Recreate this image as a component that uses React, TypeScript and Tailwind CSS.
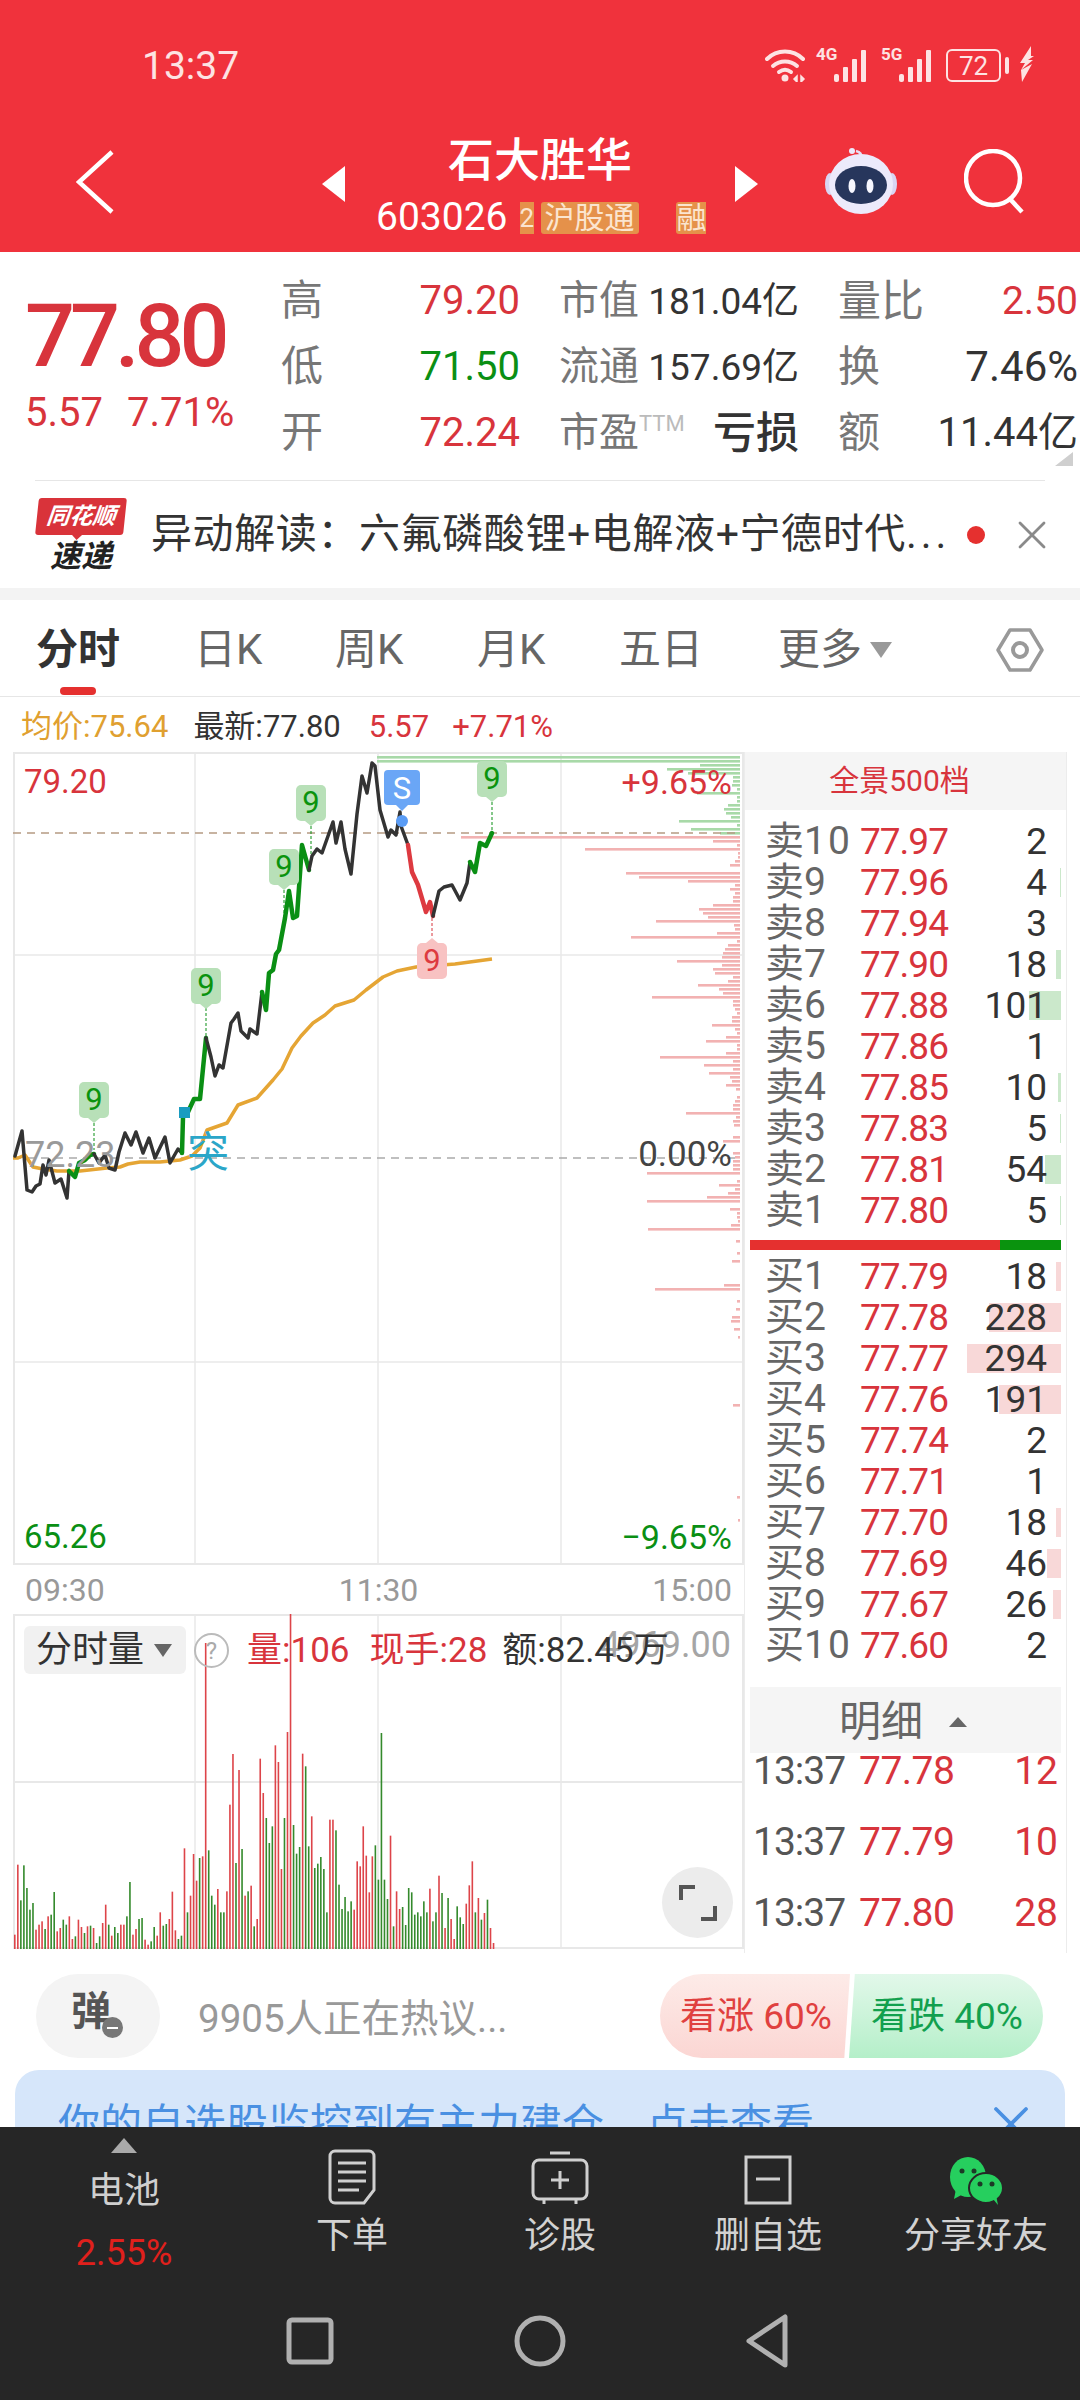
import { X } from "lucide-react";

const RED = "#d8343c";

const sellRows = [
  { n: "10", p: "77.97", v: "2", w: 0 },
  { n: "9", p: "77.96", v: "4", w: 1 },
  { n: "8", p: "77.94", v: "3", w: 0 },
  { n: "7", p: "77.90", v: "18", w: 5 },
  { n: "6", p: "77.88", v: "101", w: 32 },
  { n: "5", p: "77.86", v: "1", w: 0 },
  { n: "4", p: "77.85", v: "10", w: 3 },
  { n: "3", p: "77.83", v: "5", w: 1 },
  { n: "2", p: "77.81", v: "54", w: 16 },
  { n: "1", p: "77.80", v: "5", w: 1 },
];

const buyRows = [
  { n: "1", p: "77.79", v: "18", w: 5 },
  { n: "2", p: "77.78", v: "228", w: 72 },
  { n: "3", p: "77.77", v: "294", w: 94 },
  { n: "4", p: "77.76", v: "191", w: 62 },
  { n: "5", p: "77.74", v: "2", w: 0 },
  { n: "6", p: "77.71", v: "1", w: 0 },
  { n: "7", p: "77.70", v: "18", w: 5 },
  { n: "8", p: "77.69", v: "46", w: 14 },
  { n: "9", p: "77.67", v: "26", w: 8 },
  { n: "10", p: "77.60", v: "2", w: 0 },
];

const trades = [
  { t: "13:37", p: "77.78", v: "12" },
  { t: "13:37", p: "77.79", v: "10" },
  { t: "13:37", p: "77.80", v: "28" },
];

// price line, split where the colour changes (page pixels)
const priceSegments = [
  { c: "#333333", w: 3.5, d: "15,1156 22,1131 27,1190 32,1192 36,1186 40,1184 43,1165 46,1175 49,1160 55,1183 61,1179 67,1198 69,1171" },
  { c: "#0a8f14", w: 4.5, d: "69,1171 75,1177 79,1163 85,1160 90,1155 94,1154" },
  { c: "#333333", w: 3.5, d: "94,1154 99,1163 105,1155 109,1168 115,1170 119,1152 125,1133 131,1145 136,1132 143,1153 149,1138 155,1158 165,1137 170,1163 178,1149 182,1153" },
  { c: "#0a8f14", w: 4.5, d: "182,1153 183,1117 188,1112 194,1099 200,1099 206,1038" },
  { c: "#333333", w: 3.5, d: "206,1038 211,1057 215,1076 219,1065 223,1068 231,1023 234,1019 238,1013 241,1031 248,1038 250,1029 257,1034 262,992" },
  { c: "#0a8f14", w: 4.5, d: "262,992 266,1010 269,973 273,970 276,954 279,950 285,918 289,891 293,918 297,916 302,845 309,870" },
  { c: "#333333", w: 3.5, d: "309,870 312,856 317,849 322,853 333,822 336,843 341,822 345,849 351,874 357,814 362,776 367,793 372,763 375,766 380,810 388,837 391,830 396,835 400,812 401,826 408,845" },
  { c: "#dd3a40", w: 4.5, d: "408,845 412,872 418,885 426,912 430,902 433,916" },
  { c: "#333333", w: 3.5, d: "433,916 439,891 444,887 452,885 460,900 467,883 470,862" },
  { c: "#0a8f14", w: 4.5, d: "470,862 475,872 480,843 486,846 492,833" },
];

const avgLine =
  "13,1158 18,1158 25,1155 33,1167 43,1169 57,1171 80,1171 107,1168 120,1167 128,1164 140,1162 160,1162 180,1160 192,1156 200,1148 207,1130 227,1123 238,1105 257,1098 273,1080 282,1069 292,1048 301,1036 313,1023 325,1015 335,1006 354,1000 366,990 383,977 397,971 416,967 455,964 492,959";

// depth bars down the right edge of the chart, one every 4px
const depthGreen = [363, 363, 40, 73, 52, 7, 7, 8, 3, 43, 3, 3, 12, 16, 14, 9, 61, 3, 49, 20];
const depthRed = [
  279, 27, 3, 155, 2, 2, 5, 10, 0, 114, 101, 52, 5, 10, 5, 7, 7, 27, 41, 37, 32, 84, 6, 5, 23, 109, 3, 12, 15, 17, 18, 63, 18,
  27, 25, 7, 12, 42, 21, 17, 88, 7, 7, 5, 3, 8, 8, 28, 5, 3, 14, 34, 3, 3, 14, 80, 7, 36, 7, 31, 10, 8, 14, 4, 0, 3, 5, 7, 7,
  54, 4, 7, 6, 0, 0, 7, 17, 0, 0, 7, 5, 7, 7, 7, 93, 0, 3, 21, 5, 12, 33, 93, 0, 10, 3, 3, 2, 9, 92,
];
const depthLow = [
  [1240, 4], [1252, 3], [1260, 8], [1284, 16], [1288, 85], [1300, 3], [1308, 4], [1316, 8], [1320, 9], [1328, 6], [1336, 2],
  [1404, 7], [1496, 3], [1519, 2],
];

// y of each volume bar's top, sampled from the 3x crop (baseline 1078)
const volumeBars =
  "r1035 r825 g932 g827 g895 g960 g940 r1020 r1005 r995 g1018 r980 g975 g907 r1025 r1015 g990 g1005 r980 r1048 g1040 r990 r1012 g1030 r1010 g1008 r1015 g1060 g1040 r1000 r945 g1005 r1038 g1012 g1030 r1005 r1005 g980 g877 r1035 r1018 g988 g985 r1050 r1065 g1055 g1012 r1038 r968 g1008 g1003 r988 r906 r1022 g1048 g1038 r776 g968 r918 r793 r873 g805 r800 r160 g782 g918 g945 r898 g968 g968 r905 r645 r493 g820 r541 g778 r918 g905 r888 g1010 r988 r507 r610 g685 g760 g710 r467 r517 r838 g685 r427 r72 g706 g792 g772 r492 g530 g770 r680 g835 g822 g802 g838 g968 r690 r690 g722 g885 g958 g922 g965 g935 r960 r815 r830 r710 r798 r908 r800 g767 g870 g430 g870 g928 r738 g1010 r905 r958 g952 g1006 g895 g908 g975 g968 g980 g935 g968 r897 g995 g968 r858 g910 r1015 g925 r988 r1048 g950 g983 g1003 r942 r887 r815 g968 r925 g990 r970 g930 r1015 r1060".split(
    " ",
  );

function Marker({ x, top, color, bg, up }: { x: number; top: number; color: string; bg: string; up?: boolean }) {
  const h = 36;
  return (
    <g>
      <rect x={x - 15} y={top} width={30} height={h} rx={5} fill={bg} />
      {up ? (
        <polygon points={`${x - 6},${top} ${x},${top - 5} ${x + 6},${top}`} fill={bg} />
      ) : (
        <polygon points={`${x - 6},${top + h} ${x},${top + h + 5} ${x + 6},${top + h}`} fill={bg} />
      )}
      <text x={x} y={top + 28} textAnchor="middle" fontSize={31} fontFamily="Roboto" fill={color}>
        9
      </text>
    </g>
  );
}

function PriceChart() {
  const gridX = [195, 378, 561];
  return (
    <div className="relative h-[813px] w-[731px]">
      <svg className="absolute inset-0" width={731} height={813} viewBox="13 752 731 813">
        <rect x={14} y={753} width={729} height={811} fill="none" stroke="#e8e8e8" strokeWidth={2} />
        {gridX.map((x) => (
          <line key={x} x1={x} y1={752} x2={x} y2={1565} stroke="#e8e8e8" strokeWidth={1.5} />
        ))}
        <line x1={13} y1={955} x2={742} y2={955} stroke="#e8e8e8" strokeWidth={1.5} />
        <line x1={13} y1={1362} x2={742} y2={1362} stroke="#e8e8e8" strokeWidth={1.5} />

        {depthGreen.map((len, i) => (
          <rect key={i} x={740 - len} y={756 + i * 4} width={len} height={2.6} fill="#a8d9a8" />
        ))}
        {depthRed.map((len, i) => (
          <rect key={i} x={740 - len} y={836 + i * 4} width={len} height={2.6} fill="#f2b2b2" />
        ))}
        {depthLow.map(([y, len]) => (
          <rect key={y} x={740 - len} y={y} width={len} height={2.6} fill="#f2b2b2" />
        ))}

        <line x1={13} y1={833} x2={740} y2={833} stroke="#b59a82" strokeWidth={1.5} strokeDasharray="8 6" />
        <line x1={13} y1={1158} x2={740} y2={1158} stroke="#aaaaaa" strokeWidth={1.5} strokeDasharray="8 6" />

        <polyline points={avgLine} fill="none" stroke="#e5a534" strokeWidth={3.5} strokeLinejoin="round" />
        {priceSegments.map((s, i) => (
          <polyline key={i} points={s.d} fill="none" stroke={s.c} strokeWidth={s.w} strokeLinejoin="round" strokeLinecap="round" />
        ))}

        <line x1={94} y1={1123} x2={94} y2={1150} stroke="#0a8f14" strokeWidth={1} strokeDasharray="3 2" />
        <line x1={206} y1={1008} x2={206} y2={1036} stroke="#0a8f14" strokeWidth={1} strokeDasharray="3 2" />
        <line x1={284} y1={890} x2={284} y2={916} stroke="#0a8f14" strokeWidth={1} strokeDasharray="3 2" />
        <line x1={311} y1={826} x2={311} y2={856} stroke="#0a8f14" strokeWidth={1} strokeDasharray="3 2" />
        <line x1={492} y1={802} x2={492} y2={832} stroke="#0a8f14" strokeWidth={1} strokeDasharray="3 2" />
        <line x1={432} y1={918} x2={432} y2={938} stroke={RED} strokeWidth={1} strokeDasharray="3 2" />

        <Marker x={94} top={1082} color="#0a930e" bg="#b8e0b8" />
        <Marker x={206} top={968} color="#0a930e" bg="#b8e0b8" />
        <Marker x={284} top={849} color="#0a930e" bg="#b8e0b8" />
        <Marker x={311} top={785} color="#0a930e" bg="#b8e0b8" />
        <Marker x={492} top={761} color="#0a930e" bg="#b8e0b8" />
        <Marker x={432} top={943} color="#dd3a40" bg="#f8c2c2" up />

        <rect x={384} y={770} width={36} height={35} rx={4} fill="#6aa6f6" />
        <polygon points="396,805 402,811 408,805" fill="#6aa6f6" />
        <circle cx={402} cy={821} r={6} fill="#5a9cf5" />
        <text x={402} y={799} textAnchor="middle" fontSize={31} fontFamily="Roboto" fill="#ffffff">
          S
        </text>
        <rect x={179} y={1107} width={11} height={11} fill="#1a9cc0" />
      </svg>

      <span className="absolute left-[11px] top-[14px] text-[33px] leading-[32px] text-[#d8343c]">79.20</span>
      <span className="absolute right-[12px] top-[14px] text-[34px] leading-[32px] text-[#d8343c]">+9.65%</span>
      <span className="absolute left-[12px] top-[386px] text-[36px] leading-[34px] text-[#9a9a9a]">72.23</span>
      <span className="absolute left-[174px] top-[378px] text-[42px] leading-[46px] text-[#2ba6c8]">突</span>
      <span className="absolute right-[12px] top-[386px] text-[35px] leading-[34px] text-[#444444]">0.00%</span>
      <span className="absolute left-[11px] bottom-[12px] text-[33px] leading-[32px] text-[#0a8f14]">65.26</span>
      <span className="absolute right-[12px] bottom-[12px] text-[34px] leading-[32px] text-[#0a8f14]">−9.65%</span>
    </div>
  );
}

function VolumeChart() {
  return (
    <div className="relative h-[335px] w-[731px]">
      <svg className="absolute inset-0" width={731} height={335} viewBox="13 1614 731 335">
        <rect x={14} y={1615} width={729} height={333} fill="none" stroke="#e8e8e8" strokeWidth={2} />
        {[195, 378, 561].map((x) => (
          <line key={x} x1={x} y1={1614} x2={x} y2={1949} stroke="#e8e8e8" strokeWidth={1.5} />
        ))}
        <line x1={13} y1={1782} x2={742} y2={1782} stroke="#e8e8e8" strokeWidth={2} />
        {volumeBars.map((b, i) => {
          const h = (1078 - Number(b.slice(1))) / 3;
          return (
            <rect
              key={i}
              x={14 + i * 3.03}
              y={1949 - h}
              width={1.6}
              height={h}
              fill={b[0] === "r" ? "#dd4449" : "#348a2c"}
            />
          );
        })}
      </svg>

      <div className="absolute left-[11px] top-[12px] flex h-[48px] w-[162px] items-center rounded-[6px] bg-[#f1f1f1] pl-[12px]">
        <span className="text-[36px] leading-none text-[#333333]">分时量</span>
        <span className="ml-[10px] h-0 w-0 border-x-[9px] border-t-[13px] border-x-transparent border-t-[#666666]" />
      </div>
      <div className="absolute left-[181px] top-[19px] flex h-[35px] w-[35px] items-center justify-center rounded-full border-2 border-[#bbbbbb] text-[24px] leading-none text-[#aaaaaa]">
        ?
      </div>
      <span className="absolute right-[13px] top-[13px] text-[36px] leading-[36px] text-[#a5a5a5]">4969.00</span>
      <div className="absolute left-[234px] top-[19px] flex items-center text-[35px] leading-[36px] text-[#d8343c]">
        <span>量:106</span>
        <span className="ml-[20px]">现手:28</span>
        <span className="ml-[15px] text-[#333333]">额:82.45万</span>
      </div>

      <div className="absolute left-[649px] top-[253px] flex h-[71px] w-[71px] items-center justify-center rounded-full bg-[#ececec]">
        <svg width={38} height={38} viewBox="0 0 38 38" fill="none" stroke="#555555" strokeWidth={4}>
          <path d="M2 16V3h14M36 22v13H22" />
        </svg>
      </div>
    </div>
  );
}

function BookRow({ prefix, n, p, v, w, bar }: { prefix: string; n: string; p: string; v: string; w: number; bar: string }) {
  return (
    <div className="relative flex h-[41px] items-center pl-[20px] pr-[19px]">
      {w > 0 && (
        <div className={`absolute right-[5px] top-[6px] h-[29px] ${bar}`} style={{ width: w }} />
      )}
      <div className="relative flex w-[95px] items-center text-[#666666]">
        <span className="text-[39px] leading-none">{prefix}</span>
        <span className="text-[39px] leading-none tracking-[2px]">{n}</span>
      </div>
      <span className="relative text-[37px] leading-none tracking-[-1px] text-[#d8343c]">{p}</span>
      <span className="relative flex-1 text-right text-[37px] leading-none text-[#333333]">{v}</span>
    </div>
  );
}

function OrderBook() {
  return (
    <div className="flex h-[1201px] w-[323px] flex-col border-x border-[#ececec]">
      <div className="flex h-[58px] items-center justify-center bg-[#f5f5f5] pr-[12px] text-[30px] leading-none text-[#d8343c]">
        全景500档
      </div>
      <div className="mt-[11px]">
        {sellRows.map((r) => (
          <BookRow key={r.n} prefix="卖" {...r} bar="bg-[#cbe8cb]" />
        ))}
      </div>
      <div className="ml-[5px] mr-[5px] mt-[9px] flex h-[10px]">
        <div className="w-[250px] bg-[#e5302f]" />
        <div className="flex-1 bg-[#0a930e]" />
      </div>
      <div className="mt-[6px]">
        {buyRows.map((r) => (
          <BookRow key={r.n} prefix="买" {...r} bar="bg-[#f8d8d8]" />
        ))}
      </div>
      <div className="relative mx-[5px] mt-[21px] flex h-[66px] items-center bg-[#f5f5f5] pl-[89px] pt-[4px]">
        <span className="text-[42px] leading-none text-[#666666]">明细</span>
        <span className="ml-[26px] h-0 w-0 border-x-[9px] border-b-[10px] border-x-transparent border-b-[#666666]" />
      </div>
      <div className="flex flex-1 flex-col gap-[35px]">
        {trades.map((r) => (
          <div key={r.p} className="flex h-[36px] items-center pl-[8px] pr-[8px] text-[39px] leading-none">
            <span className="w-[106px] tracking-[-1px] text-[#555555]">{r.t}</span>
            <span className="tracking-[-0.5px] text-[#d8343c]">{r.p}</span>
            <span className="flex-1 text-right text-[#d8343c]">{r.v}</span>
          </div>
        ))}
      </div>
    </div>
  );
}

function StatusIcons() {
  const c = "#fde3e3";
  const bars = (
    <>
      <rect x={0} y={24} width={5} height={8} rx={2} fill={c} />
      <rect x={9} y={17} width={5} height={15} rx={1} fill={c} />
      <rect x={18} y={9} width={5} height={23} rx={1} fill={c} />
      <rect x={27} y={0} width={5} height={32} rx={1} fill={c} />
    </>
  );
  return (
    <div className="flex items-end">
      <svg width={42} height={34} viewBox="0 0 42 34" fill="none" stroke={c} strokeWidth={4} strokeLinecap="round">
        <path d="M2 11C12 1 28 1 38 11" />
        <path d="M8 18c7-6 17-6 24 0" />
        <path d="M14 24c4-3 8-3 12 0" />
        <circle cx={20} cy={30} r={2.5} fill={c} strokeWidth={2} />
        <path d="M29 31l3-3v6zM36 28l3 3-3 3z" strokeWidth={1.5} fill={c} />
      </svg>
      <div className="relative ml-[9px] h-[34px] w-[50px]">
        <span className="absolute left-0 top-[-2px] text-[17px] font-bold leading-none text-[#fde3e3]">4G</span>
        <svg className="absolute bottom-0 right-0" width={32} height={32} viewBox="0 0 32 32">
          {bars}
        </svg>
      </div>
      <div className="relative ml-[15px] h-[34px] w-[50px]">
        <span className="absolute left-0 top-[-2px] text-[17px] font-bold leading-none text-[#fde3e3]">5G</span>
        <svg className="absolute bottom-0 right-0" width={32} height={32} viewBox="0 0 32 32">
          {bars}
        </svg>
      </div>
      <div className="ml-[15px] flex h-[33px] w-[55px] items-center justify-center rounded-[6px] border-2 border-[#fde3e3] text-[26px] leading-none text-[#fde3e3]">
        72
      </div>
      <div className="mb-[8px] ml-[4px] h-[17px] w-[4px] rounded-sm bg-[#fde3e3]" />
      <svg className="ml-[9px]" width={18} height={36} viewBox="0 0 18 36" fill={c}>
        <path d="M13 0L2 17h5L3 24l12-10h-5l6-4-3 0zM3 24l11-6L4 36z" />
      </svg>
    </div>
  );
}

function Robot() {
  return (
    <svg width={72} height={66} viewBox="0 0 72 66">
      <path d="M36 10c1-4-1-6-5-7" fill="none" stroke="#e4e1f7" strokeWidth={2.5} />
      <circle cx={27} cy={3} r={3} fill="#ece9fb" />
      <ellipse cx={5} cy={36} rx={5} ry={11} fill="#d9d5f3" />
      <ellipse cx={67} cy={36} rx={5} ry={11} fill="#d9d5f3" />
      <ellipse cx={36} cy={36} rx={32} ry={30} fill="#eceafb" />
      <ellipse cx={36} cy={37} rx={26} ry={19} fill="#27365c" />
      <ellipse cx={27} cy={38} rx={3.5} ry={7} fill="#f7f7ff" />
      <ellipse cx={45} cy={38} rx={3.5} ry={7} fill="#f7f7ff" />
    </svg>
  );
}

function Stat({ label, labelSize, value, valueClass, sup }: { label: string; labelSize: string; value: string; valueClass: string; sup?: boolean }) {
  return (
    <div className="flex h-[66px] items-center justify-between">
      <span className={`flex items-start leading-none text-[#777777] ${labelSize}`}>
        {label}
        {sup && <span className="text-[22px] leading-none text-[#bbbbbb]">TTM</span>}
      </span>
      <span className={`leading-none ${valueClass}`}>{value}</span>
    </div>
  );
}

function QuotePanel() {
  return (
    <div className="relative h-[336px] bg-white">
      <div className="flex h-[228px] items-start pt-[16px]">
        <div className="ml-[25px] w-[256px] pt-[24px]">
          <div className="text-[88px] font-medium leading-[88px] tracking-[-5px] text-[#d8343c]">77.80</div>
          <div className="mt-[13px] flex text-[40px] leading-none text-[#d8343c]">
            <span>5.57</span>
            <span className="ml-[24px]">7.71%</span>
          </div>
        </div>
        <div className="grid w-[797px] grid-cols-[239px_240px_240px] gap-x-[39px] text-[#333333]">
          <Stat label="高" labelSize="text-[42px]" value="79.20" valueClass="text-[40px] text-[#d8343c]" />
          <Stat label="市值" labelSize="text-[40px]" value="181.04亿" valueClass="text-[37px] text-[#333333]" />
          <Stat label="量比" labelSize="text-[43px]" value="2.50" valueClass="text-[39px] text-[#d8343c]" />
          <Stat label="低" labelSize="text-[42px]" value="71.50" valueClass="text-[40px] text-[#0a8f14]" />
          <Stat label="流通" labelSize="text-[40px]" value="157.69亿" valueClass="text-[37px] text-[#333333]" />
          <Stat label="换" labelSize="text-[42px]" value="7.46%" valueClass="text-[42px] text-[#333333]" />
          <Stat label="开" labelSize="text-[42px]" value="72.24" valueClass="text-[40px] text-[#d8343c]" />
          <Stat label="市盈" labelSize="text-[40px]" sup value="亏损" valueClass="text-[43px] font-medium text-[#333333]" />
          <Stat label="额" labelSize="text-[42px]" value="11.44亿" valueClass="text-[40px] text-[#333333]" />
        </div>
      </div>
      <div className="mx-[35px] h-px bg-[#e6e6e6]" />
      <div className="flex h-[107px] items-center">
        <div className="ml-[37px] flex w-[88px] flex-col items-center">
          <div className="relative flex h-[37px] w-[88px] -skew-x-6 items-center justify-center rounded-[3px] bg-[#d9333a]">
            <span className="text-[23px] font-bold italic leading-none text-white">同花顺</span>
            <span className="absolute -bottom-[5px] left-[36px] h-0 w-0 border-x-[6px] border-t-[6px] border-x-transparent border-t-[#d9333a]" />
          </div>
          <span className="mt-[6px] text-[31px] font-bold italic leading-none text-[#222222]">速递</span>
        </div>
        <span className="ml-[26px] w-[816px] shrink-0 whitespace-nowrap text-[41px] leading-none tracking-[0.6px] text-[#333333]">
          异动解读：六氟磷酸锂+电解液+宁德时代<span className="tracking-[4px]">...</span>
        </span>
        <span className="h-[18px] w-[18px] shrink-0 rounded-full bg-[#e5302f]" />
        <X className="ml-[23px] shrink-0 text-[#8a8a8a]" size={48} strokeWidth={1.4} />
      </div>
      <svg className="absolute right-[7px] top-[200px]" width={18} height={14} viewBox="0 0 18 14">
        <polygon points="18,0 18,14 0,14" fill="#cfcfcf" />
      </svg>
    </div>
  );
}

function Tabs() {
  return (
    <div className="relative grid h-[97px] grid-cols-[158px_141px_142px_142px_159px_218px_1fr] items-center border-b border-[#e6e6e6] pl-[36px] pt-[4px] text-[42px] leading-none text-[#666666]">
      <span className="font-bold text-[#333333]">分时</span>
      <span>日K</span>
      <span>周K</span>
      <span>月K</span>
      <span>五日</span>
      <span className="flex items-center">
        更多
        <span className="ml-[8px] h-0 w-0 border-x-[11px] border-t-[16px] border-x-transparent border-t-[#999999]" />
      </span>
      <svg width={48} height={46} viewBox="0 0 48 46" fill="none" stroke="#999999" strokeWidth={3.5}>
        <path d="M14 3h20l12 20-12 20H14L2 23z" strokeLinejoin="round" />
        <circle cx={24} cy={23} r={7} strokeWidth={4} />
      </svg>
      <span className="absolute left-[60px] top-[87px] h-[8px] w-[36px] rounded-full bg-[#e5302f]" />
    </div>
  );
}

function FooterIcon({ name }: { name: string }) {
  if (name === "order") {
    return (
      <svg width={48} height={56} viewBox="0 0 48 56" fill="none" stroke="#cfcfcf" strokeWidth={3}>
        <path d="M7 2h34a5 5 0 0 1 5 5v34L36 54H7a5 5 0 0 1-5-5V7a5 5 0 0 1 5-5z" />
        <path d="M10 14h28M10 23h28M10 32h28M10 41h21" />
      </svg>
    );
  }
  if (name === "diag") {
    return (
      <svg width={58} height={54} viewBox="0 0 58 54" fill="none" stroke="#cfcfcf" strokeWidth={3}>
        <path d="M19 2h20" />
        <rect x={2} y={9} width={54} height={39} rx={6} />
        <path d="M13 48v5M45 48v5M29 20v18M20 29h18" />
      </svg>
    );
  }
  if (name === "del") {
    return (
      <svg width={48} height={50} viewBox="0 0 48 50" fill="none" stroke="#cfcfcf" strokeWidth={3}>
        <rect x={2} y={2} width={44} height={46} />
        <path d="M12 24h24" />
      </svg>
    );
  }
  return (
    <svg width={56} height={48} viewBox="0 0 56 48">
      <ellipse cx={20} cy={20} rx={18} ry={20} fill="#26cf5e" />
      <polygon points="8,32 6,42 17,36" fill="#26cf5e" />
      <ellipse cx={38} cy={31} rx={17} ry={15} fill="#26cf5e" stroke="#262626" strokeWidth={2} />
      <polygon points="45,42 50,48 48,38" fill="#26cf5e" />
      <circle cx={14} cy={14} r={2.5} fill="#1c3a26" />
      <circle cx={26} cy={14} r={2.5} fill="#1c3a26" />
      <circle cx={32} cy={27} r={2.5} fill="#1c3a26" />
      <circle cx={44} cy={27} r={2.5} fill="#1c3a26" />
    </svg>
  );
}

const actions = [
  { key: "order", label: "下单" },
  { key: "diag", label: "诊股" },
  { key: "del", label: "删自选" },
  { key: "share", label: "分享好友" },
];

function Footer() {
  return (
    <div className="h-[273px] bg-[#262626]">
      <div className="grid h-[185px] grid-cols-[248px_208px_208px_208px_208px]">
        <div className="flex flex-col items-center pt-[11px]">
          <span className="h-0 w-0 border-x-[13px] border-b-[15px] border-x-transparent border-b-[#aaaaaa]" />
          <span className="mt-[20px] text-[36px] leading-none text-[#cfcfcf]">电池</span>
          <span className="mt-[26px] text-[36px] leading-none text-[#e0201c]">2.55%</span>
        </div>
        {actions.map((a) => (
          <div key={a.key} className="flex flex-col items-center">
            <div className="flex h-[91px] items-end pb-[13px]">
              <FooterIcon name={a.key} />
            </div>
            <span className="text-[36px] leading-[36px] text-[#d2d2d2]">{a.label}</span>
          </div>
        ))}
      </div>
      <div className="flex items-center justify-center">
        <svg width={520} height={60} viewBox="0 0 520 60" fill="none" stroke="#b0b0b0" strokeWidth={5} strokeLinejoin="round">
          <rect x={9} y={8} width={42} height={42} rx={3} />
          <circle cx={260} cy={29} r={23} />
          <path d="M505 5v48L469 29z" />
        </svg>
      </div>
    </div>
  );
}

export default function App() {
  return (
    <div className="flex h-[2400px] w-[1080px] flex-col overflow-hidden bg-white [font-family:Roboto,'Noto_Sans_CJK_SC',sans-serif]">
      {/* Red header */}
      <header className="h-[252px] bg-[#f0323c] text-white">
        <div className="flex h-[132px] items-start justify-between pt-[46px] pl-[142px] pr-[44px]">
          <span className="text-[39px] leading-[40px] text-[#fde3e3]">13:37</span>
          <StatusIcons />
        </div>
        <div className="flex h-[120px] items-center pl-[76px]">
          <svg className="-mt-[20px]" width={38} height={64} viewBox="0 0 38 64" fill="none" stroke="#ffffff" strokeWidth={4.5}>
            <path d="M36 2L3 32l33 30" />
          </svg>
          <span className="-mt-[16px] ml-[208px] h-0 w-0 border-y-[18px] border-r-[23px] border-y-transparent border-r-white" />
          <div className="flex w-[390px] flex-col">
            <span className="-mt-[14px] text-center text-[46px] font-medium leading-[46px]">石大胜华</span>
            <div className="mt-[19px] flex h-[32px] items-center whitespace-nowrap pl-[31px]">
              <span className="text-[39px] leading-none">603026</span>
              <span className="ml-[12px] flex h-[32px] w-[14px] items-center justify-start overflow-hidden bg-[#e5914a] text-[26px] leading-none text-[#fbe5d0]">
                2
              </span>
              <span className="ml-[7px] flex h-[32px] w-[98px] items-center justify-center rounded-[3px] bg-[#e5914a] text-[30px] leading-none text-[#fbe5d0]">
                沪股通
              </span>
              <span className="ml-[37px] flex h-[32px] w-[30px] items-center overflow-hidden rounded-l-[3px] bg-[#e5914a] pl-[1px] text-[30px] leading-none text-[#fbe5d0]">
                融
              </span>
            </div>
          </div>
          <span className="-mt-[16px] h-0 w-0 border-y-[18px] border-l-[23px] border-y-transparent border-l-white" />
          <div className="-mt-[22px] ml-[67px]">
            <Robot />
          </div>
          <svg className="-mt-[20px] ml-[67px]" width={62} height={66} viewBox="0 0 62 66" fill="none" stroke="#ffffff" strokeWidth={4.5}>
            <circle cx={29} cy={29} r={27} />
            <path d="M46 50l12 13" />
          </svg>
        </div>
      </header>

      <QuotePanel />
      <div className="h-[12px] bg-[#f3f3f3]" />
      <Tabs />

      {/* Legend above the chart */}
      <div className="flex h-[55px] items-center pt-[3px] pl-[21px] text-[31px] leading-none">
        <span className="text-[#e0a030]">均价:75.64</span>
        <span className="ml-[25px] text-[#333333]">最新:77.80</span>
        <span className="ml-[28px] text-[#d8343c]">5.57</span>
        <span className="ml-[23px] text-[#d8343c]">+7.71%</span>
      </div>

      {/* Charts and order book */}
      <div className="flex h-[1201px]">
        <div className="ml-[13px] w-[731px]">
          <PriceChart />
          <div className="flex h-[49px] items-center justify-between px-[12px] text-[32px] leading-none text-[#999999]">
            <span>09:30</span>
            <span>11:30</span>
            <span>15:00</span>
          </div>
          <VolumeChart />
        </div>
        <OrderBook />
      </div>

      {/* Comment bar */}
      <div className="flex h-[117px] items-start pt-[21px]">
        <div className="relative ml-[36px] flex h-[84px] w-[124px] items-center justify-center rounded-[42px] bg-[#f4f4f4]">
          <span className="-ml-[14px] -mt-[8px] text-[40px] font-bold leading-none text-[#555555]">弹</span>
          <span className="absolute left-[66px] top-[43px] flex h-[21px] w-[21px] items-center justify-center rounded-full bg-[#777777]">
            <span className="h-[2px] w-[11px] bg-white" />
          </span>
        </div>
        <span className="ml-[38px] mt-[26px] text-[38.5px] leading-none text-[#999999]">9905人正在热议...</span>
        <div className="ml-auto mr-[37px] flex h-[84px]">
          <div className="flex w-[190px] items-center rounded-l-[42px] bg-gradient-to-b from-[#fdebe8] to-[#fbd6d3] pl-[20px] text-[37px] leading-none text-[#e0403f] [clip-path:polygon(0_0,100%_0,97%_100%,0_100%)]">
            看涨 60%
          </div>
          <div className="-ml-[1px] flex w-[194px] items-center rounded-r-[42px] bg-gradient-to-b from-[#e2f8ea] to-[#b4efc9] pl-[22px] text-[37px] leading-none text-[#12a04e] [clip-path:polygon(3%_0,100%_0,100%_100%,0_100%)]">
            看跌 40%
          </div>
        </div>
      </div>

      {/* Blue banner, cut off by the action bar */}
      <div className="mx-[15px] flex h-[57px] items-start justify-between overflow-hidden rounded-t-[24px] bg-[#d6e6fa] pl-[43px] pr-[24px]">
        <span className="mt-[34px] text-[42px] leading-none text-[#4a90e2]">你的自选股监控到有主力建仓，点击查看</span>
        <X className="mt-[24px] shrink-0 text-[#4a90e2]" size={60} strokeWidth={1.5} />
      </div>

      <Footer />
    </div>
  );
}
